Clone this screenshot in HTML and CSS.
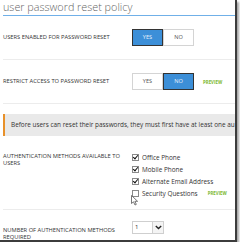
FILE: index.html
```html
<!DOCTYPE html>
<html lang="en">
<head>
    <meta charset="UTF-8">
    <title>user password reset policy</title>
    <link rel="stylesheet" href="styles.css">
</head>
<body>
    <div class="frame">
        <div class="content">
            <h1 class="title">user password reset policy</h1>

            <div class="row">
                <div class="label">USERS ENABLED FOR PASSWORD RESET</div>
                <div class="value">
                    <div class="toggle">
                        <span class="opt on">YES</span>
                        <span class="opt">NO</span>
                    </div>
                </div>
            </div>

            <div class="row">
                <div class="label">RESTRICT ACCESS TO PASSWORD RESET</div>
                <div class="value">
                    <div class="toggle">
                        <span class="opt">YES</span>
                        <span class="opt on">NO</span>
                    </div>
                    <span class="preview">PREVIEW</span>
                </div>
            </div>

            <div class="notice">Before users can reset their passwords, they must first have at least one au</div>

            <div class="row methods">
                <div class="label">AUTHENTICATION METHODS AVAILABLE TO<br>USERS</div>
                <div class="value checks">
                    <label class="check"><span class="box checked"></span>Office Phone</label>
                    <label class="check"><span class="box checked"></span>Mobile Phone</label>
                    <label class="check"><span class="box checked"></span>Alternate Email Address</label>
                    <label class="check"><span class="box"></span>Security Questions<span class="preview">PREVIEW</span></label>
                </div>
            </div>

            <div class="row count">
                <div class="label">NUMBER OF AUTHENTICATION METHODS<br>REQUIRED</div>
                <div class="value">
                    <div class="select">
                        <span class="select-value">1</span>
                        <span class="select-arrow">
                            <svg width="7" height="5" viewBox="0 0 7 5"><polyline points="0.8,1 3.5,3.6 6.2,1" fill="none" stroke="#222" stroke-width="1.4"/></svg>
                        </span>
                    </div>
                </div>
            </div>
        </div>

        <svg class="pointer" width="8" height="11" viewBox="0 0 8 11">
            <path d="M0.5 0.5 L0.5 8.5 L2.5 6.8 L4 10 L5.3 9.4 L3.9 6.3 L6.6 6.3 Z" fill="#fff" stroke="#555" stroke-width="0.8"/>
        </svg>
    </div>
</body>
</html>
```

FILE: styles.css
```css
body {
    margin: 0;
    background: #fff;
    font-family: "Open Sans", "Liberation Sans", sans-serif;
    color: #333;
}
.frame {
    position: relative;
    width: 235px;
    height: 240px;
    overflow: hidden;
    border-right: 2px solid #3c3c3c;
    border-bottom: 2px solid #3c3c3c;
    box-shadow: 2px 2px 2px rgba(0, 0, 0, 0.35);
}
.content {
    margin-left: 3px;
}
.title {
    margin: 0;
    height: 14px;
    padding-top: 1px;
    font-size: 10.8px;
    font-weight: 300;
    line-height: 11px;
    color: #666;
    border-bottom: 1px solid #70b0e8;
    white-space: nowrap;
}
.row {
    display: grid;
    grid-template-columns: 129px auto;
    align-items: center;
    height: 43px;
    border-bottom: 1px solid #ececec;
}
.label {
    font-size: 5.75px;
    line-height: 7px;
    color: #333;
    white-space: nowrap;
}
.value {
    display: flex;
    align-items: center;
}
.toggle {
    display: flex;
}
.opt {
    width: 31px;
    height: 17px;
    box-sizing: border-box;
    border: 1px solid #d4d4d4;
    background: #fff;
    color: #555;
    font-size: 5.6px;
    line-height: 15px;
    text-align: center;
}
.opt.on {
    background: #3c8fd8;
    border-color: #333;
    color: #e8f2fb;
}
.preview {
    margin-left: 9px;
    font-size: 4.4px;
    font-weight: bold;
    color: #7cb82f;
}
.notice {
    margin-top: 10px;
    height: 22px;
    box-sizing: border-box;
    border-left: 2px solid #e8912a;
    background: #e9e9e9;
    padding-left: 6px;
    font-size: 6.4px;
    line-height: 22px;
    color: #333;
    white-space: nowrap;
}
.methods {
    height: auto;
    align-items: start;
    padding: 15px 0 10px;
}
.methods .label {
    padding-top: 2px;
}
.checks {
    flex-direction: column;
    align-items: flex-start;
}
.check {
    display: flex;
    align-items: center;
    height: 12px;
    font-size: 6.4px;
    color: #333;
}
.box {
    position: relative;
    width: 7px;
    height: 7px;
    box-sizing: border-box;
    border: 1px solid #8a8a8a;
    margin-right: 3px;
    background: #fff;
}
.box.checked::after {
    content: "";
    position: absolute;
    left: 1px;
    top: -0.5px;
    width: 2px;
    height: 4px;
    border: solid #111;
    border-width: 0 1.3px 1.3px 0;
    transform: rotate(40deg);
}
.check .preview {
    margin-left: 10px;
}
.count {
    height: 33px;
    border-bottom: none;
    align-items: start;
}
.count .label {
    padding-top: 17px;
}
.count .value {
    padding-top: 11px;
}
.select {
    display: flex;
    width: 32px;
    height: 13px;
    box-sizing: border-box;
    border: 1px solid #cfcfcf;
    background: #fff;
}
.select-value {
    flex: 1;
    font-size: 6px;
    line-height: 11px;
    padding-left: 2px;
    color: #333;
}
.select-arrow {
    width: 10px;
    border-left: 1px solid #cfcfcf;
    display: flex;
    align-items: center;
    justify-content: center;
    background: #f4f4f4;
}
.pointer {
    position: absolute;
    left: 131px;
    top: 195px;
}
```
